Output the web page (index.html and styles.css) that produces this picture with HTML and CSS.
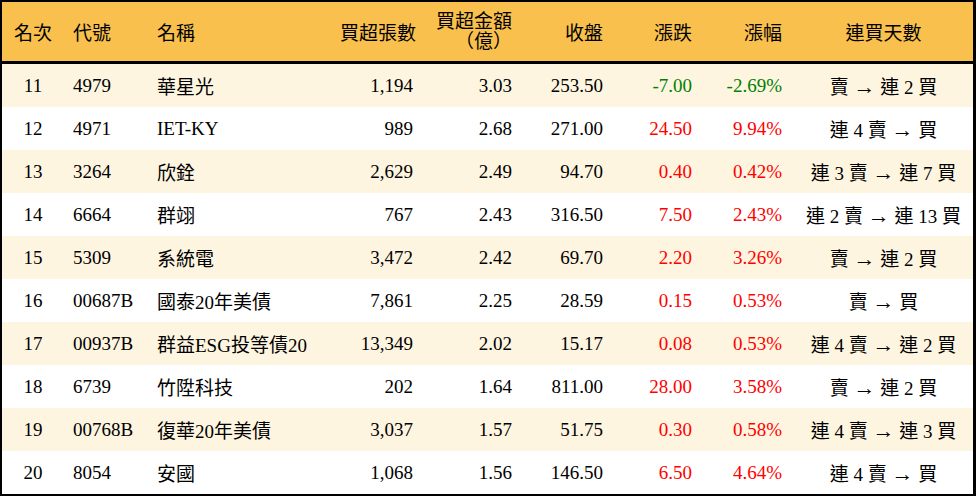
FILE: index.html
```
<!DOCTYPE html>
<html lang="zh-Hant">
<head>
<meta charset="utf-8">
<title>買超排行</title>
<link rel="stylesheet" href="styles.css">
</head>
<body>
<div class="table">
  <div class="row head">
    <div class="c1">名次</div>
    <div class="c2">代號</div>
    <div class="c3">名稱</div>
    <div class="c4">買超張數</div>
    <div class="c5 two">買超金額<br>（億）</div>
    <div class="c6">收盤</div>
    <div class="c7">漲跌</div>
    <div class="c8">漲幅</div>
    <div class="c9">連買天數</div>
  </div>
  <div class="row odd">
    <div class="c1">11</div><div class="c2">4979</div><div class="c3">華星光</div><div class="c4">1,194</div><div class="c5">3.03</div><div class="c6">253.50</div><div class="c7 down">-7.00</div><div class="c8 down">-2.69%</div><div class="c9">賣 <span class="arw">→</span> 連 2 買</div>
  </div>
  <div class="row">
    <div class="c1">12</div><div class="c2">4971</div><div class="c3">IET-KY</div><div class="c4">989</div><div class="c5">2.68</div><div class="c6">271.00</div><div class="c7 up">24.50</div><div class="c8 up">9.94%</div><div class="c9">連 4 賣 <span class="arw">→</span> 買</div>
  </div>
  <div class="row odd">
    <div class="c1">13</div><div class="c2">3264</div><div class="c3">欣銓</div><div class="c4">2,629</div><div class="c5">2.49</div><div class="c6">94.70</div><div class="c7 up">0.40</div><div class="c8 up">0.42%</div><div class="c9">連 3 賣 <span class="arw">→</span> 連 7 買</div>
  </div>
  <div class="row">
    <div class="c1">14</div><div class="c2">6664</div><div class="c3">群翊</div><div class="c4">767</div><div class="c5">2.43</div><div class="c6">316.50</div><div class="c7 up">7.50</div><div class="c8 up">2.43%</div><div class="c9">連 2 賣 <span class="arw">→</span> 連 13 買</div>
  </div>
  <div class="row odd">
    <div class="c1">15</div><div class="c2">5309</div><div class="c3">系統電</div><div class="c4">3,472</div><div class="c5">2.42</div><div class="c6">69.70</div><div class="c7 up">2.20</div><div class="c8 up">3.26%</div><div class="c9">賣 <span class="arw">→</span> 連 2 買</div>
  </div>
  <div class="row">
    <div class="c1">16</div><div class="c2">00687B</div><div class="c3">國泰20年美債</div><div class="c4">7,861</div><div class="c5">2.25</div><div class="c6">28.59</div><div class="c7 up">0.15</div><div class="c8 up">0.53%</div><div class="c9">賣 <span class="arw">→</span> 買</div>
  </div>
  <div class="row odd">
    <div class="c1">17</div><div class="c2">00937B</div><div class="c3">群益ESG投等債20</div><div class="c4">13,349</div><div class="c5">2.02</div><div class="c6">15.17</div><div class="c7 up">0.08</div><div class="c8 up">0.53%</div><div class="c9">連 4 賣 <span class="arw">→</span> 連 2 買</div>
  </div>
  <div class="row">
    <div class="c1">18</div><div class="c2">6739</div><div class="c3">竹陞科技</div><div class="c4">202</div><div class="c5">1.64</div><div class="c6">811.00</div><div class="c7 up">28.00</div><div class="c8 up">3.58%</div><div class="c9">賣 <span class="arw">→</span> 連 2 買</div>
  </div>
  <div class="row odd">
    <div class="c1">19</div><div class="c2">00768B</div><div class="c3">復華20年美債</div><div class="c4">3,037</div><div class="c5">1.57</div><div class="c6">51.75</div><div class="c7 up">0.30</div><div class="c8 up">0.58%</div><div class="c9">連 4 賣 <span class="arw">→</span> 連 3 買</div>
  </div>
  <div class="row">
    <div class="c1">20</div><div class="c2">8054</div><div class="c3">安國</div><div class="c4">1,068</div><div class="c5">1.56</div><div class="c6">146.50</div><div class="c7 up">6.50</div><div class="c8 up">4.64%</div><div class="c9">連 4 賣 <span class="arw">→</span> 買</div>
  </div>
</div>
</body>
</html>
```
FILE: styles.css
```
html, body {
  margin: 0;
  padding: 0;
  background: #ffffff;
}
.table {
  width: 976px;
  height: 496px;
  box-sizing: border-box;
  border-top: 2px solid #000;
  border-left: 2px solid #000;
  border-right: 3px solid #000;
  border-bottom: 2px solid #000;
  font-family: "Liberation Serif", "Noto Sans CJK TC", serif;
  font-size: 19px;
  color: #000;
}
.row {
  display: grid;
  grid-template-columns: 62px 81px 195px 85px 99px 91px 89px 90px 179px;
  align-items: center;
  height: 43px;
  background: #ffffff;
  white-space: nowrap;
}
.row.odd {
  background: #fef5e1;
}
.row.head {
  height: 59px;
  border-bottom: 3px solid #000;
  background: #f9c04e;
}
.two {
  line-height: 20px;
}
.c1 { text-align: center; }
.c2 { padding-left: 9px; }
.c3 { padding-left: 12px; }
.c4, .c5, .c6, .c7, .c8 {
  text-align: right;
  padding-right: 12px;
}
.c9 { text-align: center; }
.arw {
  font-size: 22px;
  line-height: 1;
}
.up { color: #ff0000; }
.down { color: #008000; }
```
